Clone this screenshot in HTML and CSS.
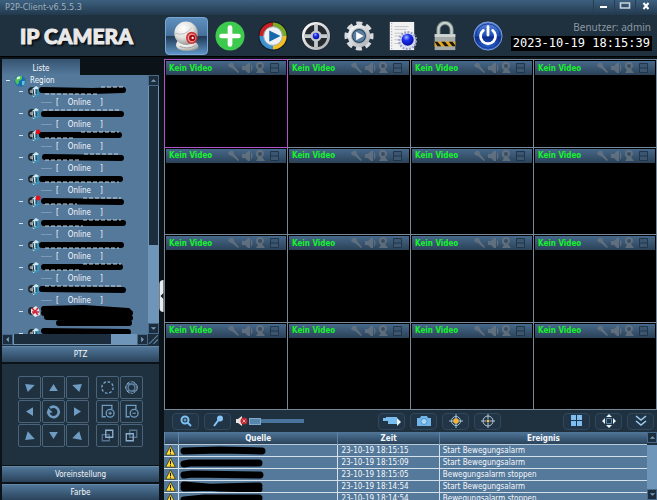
FILE: index.html
```html
<!DOCTYPE html>
<html lang="de">
<head>
<meta charset="utf-8">
<title>P2P-Client-v6.5.5.3</title>
<link rel="stylesheet" href="styles.css">
</head>
<body>
<svg class="defs" aria-hidden="true">
  <defs>
    <linearGradient id="silver" x1="0" y1="0" x2="1" y2="1"><stop offset="0" stop-color="#fff"/><stop offset="1" stop-color="#a9adb0"/></linearGradient>
    <radialGradient id="ball" cx=".38" cy=".3" r=".75"><stop offset="0" stop-color="#fff"/><stop offset=".55" stop-color="#e0e0dc"/><stop offset="1" stop-color="#8c8f90"/></radialGradient>
    <radialGradient id="blue" cx=".4" cy=".3" r=".7"><stop offset="0" stop-color="#a9b8ff"/><stop offset=".4" stop-color="#1b2ff0"/><stop offset="1" stop-color="#0510a0"/></radialGradient>
    <linearGradient id="power" x1="0" y1="0" x2="0" y2="1"><stop offset="0" stop-color="#5d8be0"/><stop offset=".48" stop-color="#1f4db4"/><stop offset=".55" stop-color="#0c2c8c"/><stop offset="1" stop-color="#2f6ad8"/></linearGradient>
    <symbol id="cell-tools" viewBox="0 0 56 12">
      <g fill="#6d7883" opacity=".75">
        <path d="M1 3l2-2 3 0 1 3 5 6-1 1-6-5-3-1z"/>
        <path d="M15 4h3l3-3h2v10h-2l-3-3h-3zM24 2q3 4 0 8z"/>
        <path d="M29 4a4 4 0 0 1 8 0 4 4 0 0 1-2 3l3 4h-9l2-3a4 4 0 0 1-2-4z"/>
      </g>
      <circle cx="33" cy="4" r="2" fill="#3a4d61"/>
      <path d="M43.500 1.500h8v9h-8zM43.500 6h8" fill="#3d566f" stroke="#21364a"/>
    </symbol>
    <symbol id="cam" viewBox="0 0 12 12">
      <circle cx="4" cy="5" r="4" fill="#1d2830"/><circle cx="3.500" cy="5.500" r="1.800" fill="#8b949b"/>
      <path d="M4 3l4-3 3 2 0 6-2 2-4 1z" fill="#cdeaf5"/><path d="M8 4l3-2 0 6-2 3-3 0 2-3z" fill="#2f91b8"/><path d="M5 3l1 7M8 3v5" stroke="#142733"/>
    </symbol>
    <symbol id="cam-off" viewBox="0 0 12 12">
      <circle cx="4" cy="5" r="4" fill="#1d2830"/><path d="M3 3l5-3 3 3 1 6-5 2-4-4z" fill="#e7e6ea"/><path d="M4 2l6 7M10 2l-5 6M4 6h7" stroke="#cc2738" stroke-width="1.500"/>
    </symbol>
    <symbol id="warn" viewBox="0 0 12 12"><path d="M6 1l5.300 10H.7z" fill="#ffdf3a" stroke="#352b08" stroke-width=".8" stroke-linejoin="round"/><path d="M6 4v4M6 9v1" stroke="#161200" stroke-width="1.200"/></symbol>
    <symbol id="tri" viewBox="0 0 24 24"><path d="M12 8l5 8H7z" fill="#6f9cc2"/></symbol>
    <symbol id="corner" viewBox="0 0 24 24"><path d="M7 8l11 1-8 8z" fill="#6f9cc2"/></symbol>
  </defs>
</svg>

<header class="titlebar">
  <h1 class="caption">P2P-Client-v6.5.5.3</h1>
  <div class="winbuttons">
    <button aria-label="Minimieren"><svg viewBox="0 0 14 12"><path d="M3 7h7" stroke="#fff" stroke-width="2"/></svg></button>
    <button aria-label="Maximieren"><svg viewBox="0 0 14 12"><path d="M2.500 3h9v5h-9z" fill="none" stroke="#c9d3dc" stroke-width="1.600"/></svg></button>
    <button aria-label="Beenden"><svg viewBox="0 0 14 12"><path d="M4.500 3l5 6M9.500 3l-5 6" stroke="#fff" stroke-width="2"/></svg></button>
  </div>
</header>

<div class="banner">
  <div class="logo">IP CAMERA</div>
  <nav class="mainnav">
    <button class="active" aria-label="Kamera"><svg viewBox="0 0 32 32"><path d="M6 21Q2 27 7 30q9 4 20 0 4-4-4-9z" fill="url(#ball)"/><circle cx="15" cy="13" r="12.500" fill="url(#ball)"/><path d="M8 27q9 4 17-1" stroke="#999" fill="none"/><path d="M3 13q11 4 18-6" stroke="#bbb" fill="none"/><ellipse cx="21" cy="18" rx="6" ry="6.500" fill="#c83333"/><ellipse cx="21" cy="18" rx="4.300" ry="4.800" fill="#f19b93"/><circle cx="21.500" cy="18" r="3.300" fill="#a50e18"/><circle cx="22" cy="18" r="1.200" fill="#fff"/></svg></button>
    <button aria-label="Hinzufügen"><svg viewBox="0 0 32 32"><circle cx="16" cy="16" r="15.500" fill="#3ecb4d"/><path d="M16 7v18M7 16h18" stroke="#fff" stroke-width="5" stroke-linecap="round"/></svg></button>
    <button aria-label="Wiedergabe"><svg viewBox="0 0 32 32"><circle cx="16" cy="16" r="15.500" fill="#101820"/><g fill="none" stroke-width="5"><path d="M16 4A12 12 0 0 0 4 16" stroke="#c92024"/><path d="M16 4a12 12 0 0 1 12 12" stroke="#78ac27"/><path d="M28 16a12 12 0 0 1-12 12" stroke="#f3bf23"/><path d="M16 28A12 12 0 0 1 4 16" stroke="#3a92d0"/></g><circle cx="16" cy="16" r="10" fill="#eef2f5" stroke="#9ba8b2"/><path d="M12 10l12 6-12 6z" fill="#1668ae"/></svg></button>
    <button aria-label="PTZ-Steuerung"><svg viewBox="0 0 32 32"><circle cx="16" cy="16" r="15.500" fill="#171b20"/><circle cx="16" cy="16" r="13.500" fill="#252a31" stroke="url(#silver)" stroke-width="3"/><path d="M16 4v24M4 16h24" stroke="#c6cacd" stroke-width="4"/><circle cx="16" cy="16" r="6" fill="#c6cacd"/><circle cx="16" cy="16" r="3.500" fill="url(#blue)"/></svg></button>
    <button aria-label="Einstellungen"><svg viewBox="0 0 32 32"><circle cx="16" cy="16" r="13" fill="none" stroke="#d8dbdd" stroke-width="5" stroke-dasharray="6.200 4" stroke-dashoffset="3.100"/><circle cx="16" cy="16" r="12" fill="url(#silver)"/><circle cx="16" cy="16" r="8" fill="#29435f" stroke="#aab5bd"/><circle cx="16" cy="16" r="6.500" fill="#5a7c9d"/><path d="M13 11.500l8 4.500-8 4.500z" fill="#fff"/></svg></button>
    <button aria-label="Protokoll"><svg viewBox="0 0 32 32"><path d="M3 1h26v30H3z" fill="#f3f2f2"/><path d="M5 2v28" stroke="#8b8b91" stroke-dasharray="1 2"/><path d="M8 6h15M8 9h13M8 13h8M8 16h6M8 20h5M8 24h5" stroke="#c1c0c5"/><circle cx="22" cy="21" r="9" fill="#dbe0ef" stroke="#9aa1c5" stroke-width="2.500" stroke-dasharray="2 1.500"/><circle cx="22" cy="20" r="6.500" fill="url(#blue)"/></svg></button>
    <button aria-label="Sperren"><svg viewBox="0 0 32 32"><path d="M9 16V9a7 7 0 0 1 14 0v7" fill="none" stroke="#717e7b" stroke-width="4.500"/><path d="M9 16V9a7 7 0 0 1 14 0v7" fill="none" stroke="#c5cfcb" stroke-width="2.500"/><path d="M5 14h22v17H5z" fill="#a6aca9"/><path d="M5 14h22v3H5z" fill="#d1d6d3"/><path d="M5 22h22v5H5z" fill="#e4a51f"/><path d="M5 22h3l4 5H8zM12 22h4l4 5h-4zM20 22h4l3 4v1h-3z" fill="#17160f"/></svg></button>
    <button aria-label="Abmelden"><svg viewBox="0 0 32 32"><circle cx="16" cy="16" r="15" fill="url(#power)" stroke="#82a5df"/><circle cx="16" cy="16" r="13" fill="none" stroke="#17378f"/><path d="M11 10a8 8 0 1 0 10 0" fill="none" stroke="#fff" stroke-width="3" stroke-linecap="round"/><path d="M16 6v9" stroke="#fff" stroke-width="3" stroke-linecap="round"/></svg></button>
  </nav>
  <div class="status">
    <span class="user">Benutzer: admin</span>
    <time class="clock" datetime="2023-10-19T18:15:39">2023-10-19 18:15:39</time>
  </div>
</div>

<div class="workspace">
  <aside class="sidebar">
    <div class="tabs"><button class="tab">Liste</button></div>
    <div class="treebox">
      <ul class="tree">
        <li class="region"><svg viewBox="0 0 24 12"><path d="M2 5.500h4" stroke="#d9e8f2"/><circle cx="16" cy="6" r="5.500" fill="#1b6cb4"/><path d="M12 3q3-3 6-2l0 3-3 2-1 4q-3-2-3-5z" fill="#4fc552"/><path d="M18 6l3 0-1 4-2 0z" fill="#59c9d8"/><path d="M13 2l3-.5v2l-3 1z" fill="#e2fae7"/></svg>Region</li>
        <li class="device"><i></i><svg class="ico"><use href="#cam"/></svg><svg class="mark" viewBox="0 0 98 11"><path d="M1 4l50 1 31-1" class="ink"/><path d="M4 8h52M60 1h22" class="speck"/></svg></li><li class="state"><i></i>[ <span>Online</span> ]</li>
        <li class="device"><i></i><svg class="ico"><use href="#cam"/></svg><svg class="mark" viewBox="0 0 98 11"><path d="M3 6h77" class="ink"/><path d="M2 2h78" class="speck"/></svg></li><li class="state"><i></i>[ <span>Online</span> ]</li>
        <li class="device"><i></i><svg class="ico"><use href="#cam"/><circle cx="10" cy="2" r="2.500" fill="#e11320"/></svg><svg class="mark" viewBox="0 0 98 11"><path d="M1 5h77" class="ink"/><path d="M40 2h38M4 8h30" class="speck"/></svg></li><li class="state"><i></i>[ <span>Online</span> ]</li>
        <li class="device"><i></i><svg class="ico"><use href="#cam"/></svg><svg class="mark" viewBox="0 0 98 11"><path d="M4 5l76 1" class="ink"/><path d="M43 2h36M4 8h36" class="speck"/></svg></li><li class="state"><i></i>[ <span>Online</span> ]</li>
        <li class="device"><i></i><svg class="ico"><use href="#cam"/></svg><svg class="mark" viewBox="0 0 98 11"><path d="M1 5h78" class="ink"/><path d="M4 8h74" class="speck"/></svg></li><li class="state"><i></i>[ <span>Online</span> ]</li>
        <li class="device"><i></i><svg class="ico"><use href="#cam"/><circle cx="10" cy="2" r="2.500" fill="#e11320"/></svg><svg class="mark" viewBox="0 0 98 11"><path d="M3 5l77 1" class="ink"/><path d="M42 2h38M4 8h32" class="speck"/></svg></li><li class="state"><i></i>[ <span>Online</span> ]</li>
        <li class="device"><i></i><svg class="ico"><use href="#cam"/></svg><svg class="mark" viewBox="0 0 98 11"><path d="M3 5h79" class="ink"/><path d="M42 2h38M4 8h38" class="speck"/></svg></li><li class="state"><i></i>[ <span>Online</span> ]</li>
        <li class="device"><i></i><svg class="ico"><use href="#cam"/></svg><svg class="mark" viewBox="0 0 98 11"><path d="M1 5h79" class="ink"/><path d="M4 8h74" class="speck"/></svg></li><li class="state"><i></i>[ <span>Online</span> ]</li>
        <li class="device"><i></i><svg class="ico"><use href="#cam"/></svg><svg class="mark" viewBox="0 0 98 11"><path d="M3 5h76" class="ink"/><path d="M42 2h38M4 8h36" class="speck"/></svg></li><li class="state"><i></i>[ <span>Online</span> ]</li>
        <li class="device"><i></i><svg class="ico"><use href="#cam"/></svg><svg class="mark" viewBox="0 0 98 11"><path d="M1 5l81 1" class="ink"/><path d="M4 2h78" class="speck"/></svg></li><li class="state"><i></i>[ <span>Online</span> ]</li>
        <li class="device"><i></i><svg class="ico"><use href="#cam-off"/></svg><svg class="mark" viewBox="0 0 98 11"><path d="M3 3l40-1 44 3M3 7h86M6 11l83 1M18 17h70" class="ink"/></svg></li><li class="state"></li>
        <li class="device"><i></i><svg class="ico"><use href="#cam"/></svg><svg class="mark" viewBox="0 0 98 11"><path d="M3 3l84 1" class="ink"/></svg></li>
      </ul>
      <div class="vscroll"><button aria-label="Nach oben"><svg viewBox="0 0 10 10"><path d="M2 6.500l3-3 3 3z"/></svg></button><div class="rail"><div class="thumb"></div></div><button aria-label="Nach unten"><svg viewBox="0 0 10 10"><path d="M2 3.500l3 3 3-3z"/></svg></button></div>
    </div>
    <div class="hscroll"><button aria-label="Nach links"><svg viewBox="0 0 10 10"><path d="M6.500 2l-3 3 3 3z"/></svg></button><div class="rail"><div class="thumb"></div></div><button aria-label="Nach rechts"><svg viewBox="0 0 10 10"><path d="M3.500 2l3 3-3 3z"/></svg></button><svg class="grip" viewBox="0 0 10 10"><path d="M1 9l8-8M5 9l4-4" stroke="#5f83a3"/></svg></div>
    <button class="section">PTZ</button>
    <div class="ptz">
      <div class="pad directions">
        <button aria-label="Links oben"><svg><use href="#corner"/></svg></button>
        <button aria-label="Oben"><svg><use href="#tri"/></svg></button>
        <button aria-label="Rechts oben"><svg class="flip"><use href="#corner"/></svg></button>
        <button aria-label="Links"><svg class="left"><use href="#tri"/></svg></button>
        <button aria-label="Drehen"><svg viewBox="0 0 24 24"><path d="M8 8a6 6 0 1 1-2 5" fill="none" stroke="#6f9cc2" stroke-width="3"/><path d="M4 14l2-6 5 5z" fill="#6f9cc2"/></svg></button>
        <button aria-label="Rechts"><svg class="right"><use href="#tri"/></svg></button>
        <button aria-label="Links unten"><svg viewBox="0 0 24 24"><path d="M10 7l8 9-11 1z" fill="#6f9cc2"/></svg></button>
        <button aria-label="Unten"><svg class="down"><use href="#tri"/></svg></button>
        <button aria-label="Rechts unten"><svg viewBox="0 0 24 24"><path d="M14 7L6 15l11 2z" fill="#6f9cc2"/></svg></button>
      </div>
      <div class="pad lens">
        <button aria-label="Blende auf"><svg viewBox="0 0 24 24"><circle cx="12" cy="12" r="6.500" fill="none" stroke="#6f9cc2" stroke-width="1.600" stroke-dasharray="3 2"/></svg></button>
        <button aria-label="Blende zu"><svg viewBox="0 0 24 24"><circle cx="12" cy="12" r="5" fill="none" stroke="#587b9a" stroke-width="4"/><circle cx="12" cy="12" r="6.500" fill="none" stroke="#9ab7cf" stroke-dasharray="4 2"/><path d="M9 6l6 1M17 9l0 6M15 18l-6-1M7 15V9" stroke="#203243"/></svg></button>
        <button aria-label="Zoom größer"><svg viewBox="0 0 24 24"><path d="M17 9V5H6v13h4" fill="none" stroke="#6f9cc2" stroke-width="1.500"/><circle cx="15" cy="14" r="4.500" fill="none" stroke="#6f9cc2" stroke-width="1.500"/><path d="M13 14h4M15 12v4" stroke="#8db1cf"/></svg></button>
        <button aria-label="Zoom kleiner"><svg viewBox="0 0 24 24"><path d="M17 9V5H6v13h4" fill="none" stroke="#6f9cc2" stroke-width="1.500"/><circle cx="15" cy="14" r="4.500" fill="none" stroke="#6f9cc2" stroke-width="1.500"/><path d="M13 14h4" stroke="#8db1cf"/></svg></button>
        <button aria-label="Fokus nah"><svg viewBox="0 0 24 24" fill="none" stroke-width="1.500"><path d="M6 11h8v7H6z" stroke="#54738f"/><path d="M10 6h8v8h-8z" stroke="#8bb0d0"/></svg></button>
        <button aria-label="Fokus fern"><svg viewBox="0 0 24 24" fill="none" stroke-width="1.500"><path d="M10 6h8v8h-8z" stroke="#54738f"/><path d="M6 10h8v8H6z" stroke="#8bb0d0"/></svg></button>
      </div>
    </div>
    <button class="section">Voreinstellung</button>
    <button class="section last">Farbe</button>
  </aside>
  <button class="splitter" aria-label="Seitenleiste einklappen"><svg viewBox="0 0 4 32"><path d="M0 4q0-4 4-4v32q-4 0-4-4z" fill="#e9edf0"/><path d="M4 13v6l-3-3z" fill="#101820"/></svg></button>

  <main class="main">
    <section class="wall">
      <div class="cell selected"><div class="bar">Kein Video<svg><use href="#cell-tools"/></svg></div></div>
      <div class="cell"><div class="bar">Kein Video<svg><use href="#cell-tools"/></svg></div></div>
      <div class="cell"><div class="bar">Kein Video<svg><use href="#cell-tools"/></svg></div></div>
      <div class="cell"><div class="bar">Kein Video<svg><use href="#cell-tools"/></svg></div></div>
      <div class="cell"><div class="bar">Kein Video<svg><use href="#cell-tools"/></svg></div></div>
      <div class="cell"><div class="bar">Kein Video<svg><use href="#cell-tools"/></svg></div></div>
      <div class="cell"><div class="bar">Kein Video<svg><use href="#cell-tools"/></svg></div></div>
      <div class="cell"><div class="bar">Kein Video<svg><use href="#cell-tools"/></svg></div></div>
      <div class="cell"><div class="bar">Kein Video<svg><use href="#cell-tools"/></svg></div></div>
      <div class="cell"><div class="bar">Kein Video<svg><use href="#cell-tools"/></svg></div></div>
      <div class="cell"><div class="bar">Kein Video<svg><use href="#cell-tools"/></svg></div></div>
      <div class="cell"><div class="bar">Kein Video<svg><use href="#cell-tools"/></svg></div></div>
      <div class="cell"><div class="bar">Kein Video<svg><use href="#cell-tools"/></svg></div></div>
      <div class="cell"><div class="bar">Kein Video<svg><use href="#cell-tools"/></svg></div></div>
      <div class="cell"><div class="bar">Kein Video<svg><use href="#cell-tools"/></svg></div></div>
      <div class="cell"><div class="bar">Kein Video<svg><use href="#cell-tools"/></svg></div></div>
    </section>

    <div class="controls">
      <button aria-label="Zoom"><svg viewBox="0 0 20 14"><circle cx="9" cy="6" r="3.500" fill="none" stroke="#7fc0f2" stroke-width="2"/><path d="M9 4.500v3M7.500 6h3" stroke="#7fc0f2"/><path d="M11.500 8.500l3.500 3.500" stroke="#7fc0f2" stroke-width="2"/></svg></button>
      <button aria-label="Mikrofon"><svg viewBox="0 0 20 14"><circle cx="12" cy="4.500" r="3" fill="#86c5f5"/><path d="M10.500 6L6 12" stroke="#86c5f5" stroke-width="2"/></svg></button>
      <label class="volume"><svg viewBox="0 0 12 12"><path d="M0 4h2l4-3v10L2 8H0z" fill="#e8e3e3"/><circle cx="8" cy="6" r="3.500" fill="#bb2630"/><path d="M6.500 4.500l3 3M9.500 4.500l-3 3" stroke="#f5abae"/></svg><input type="range" min="0" max="100" value="0" aria-label="Lautstärke"></label>
      <span class="spacer"></span>
      <button aria-label="Aufnahme"><svg viewBox="0 0 20 14"><path d="M1 4h3V3h11v2l3 3-3 3v-1H6V7H1z" fill="#79bdf0"/><path d="M15 4l4 4-4 4z" fill="#e9f5ff"/></svg></button>
      <button aria-label="Schnappschuss"><svg viewBox="0 0 20 14"><path d="M3 4h3l1-2h6l1 2h3v8H3z" fill="#72b5ea"/><circle cx="10" cy="7.500" r="3" fill="#a7d6fa" stroke="#4f92c7"/></svg></button>
      <button aria-label="Alarm ein"><svg viewBox="0 0 20 14"><circle cx="10" cy="7" r="4.500" fill="none" stroke="#a6c7dc"/><path d="M10 0v14M3 7h14" stroke="#a6c7dc"/><circle cx="10" cy="7" r="2.800" fill="#f2b33a"/></svg></button>
      <button aria-label="Alarm aus"><svg viewBox="0 0 20 14"><circle cx="10" cy="7" r="5" fill="none" stroke="#b3c6d3"/><path d="M10 0v5M10 9v5M3 7h5M12 7h5" stroke="#b3c6d3"/><circle cx="10" cy="7" r="1.500" fill="#e7bd5c"/></svg></button>
      <span class="spacer"></span>
      <button aria-label="Raster"><svg viewBox="0 0 20 14"><path d="M4 1h5v5H4zM10 1h5v5h-5zM4 7h5v5H4zM10 7h5v5h-5z" fill="#7dbff1"/></svg></button>
      <button aria-label="Vollbild"><svg viewBox="0 0 20 14"><path d="M7.500 4.500h5v5h-5z" fill="none" stroke="#5d86a7"/><path d="M10 0l3 3H7zM10 14l-3-3h6zM3 7l3-3v6zM17 7l-3-3v6z" fill="#eaf4fb"/></svg></button>
      <button aria-label="Einklappen"><svg viewBox="0 0 20 14"><path d="M5 2l5 4 5-4M5 7l5 4 5-4" fill="none" stroke="#9dcaee" stroke-width="1.600"/></svg></button>
    </div>

    <section class="log">
      <div class="logview">
        <table>
          <colgroup><col class="c-icon"><col class="c-src"><col class="c-time"><col></colgroup>
          <thead><tr><th></th><th>Quelle</th><th>Zeit</th><th>Ereignis</th></tr></thead>
          <tbody>
            <tr><td><svg class="warn"><use href="#warn"/></svg></td><td><svg class="scrub" viewBox="0 0 100 11"><path d="M5 6l36-1 42 1"/></svg></td><td>23-10-19 18:15:15</td><td>Start Bewegungsalarm</td></tr>
            <tr><td><svg class="warn"><use href="#warn"/></svg></td><td><svg class="scrub" viewBox="0 0 100 11"><path d="M5 7l6-1h69"/></svg></td><td>23-10-19 18:15:09</td><td>Start Bewegungsalarm</td></tr>
            <tr><td><svg class="warn"><use href="#warn"/></svg></td><td><svg class="scrub" viewBox="0 0 100 11"><path d="M5 6l8-1 68 1"/></svg></td><td>23-10-19 18:15:05</td><td>Bewegungsalarm stoppen</td></tr>
            <tr><td><svg class="warn"><use href="#warn"/></svg></td><td><svg class="scrub" viewBox="0 0 100 11"><path d="M5 4l35 3 40 1M5 7l35-1 40-1"/></svg></td><td>23-10-19 18:14:54</td><td>Start Bewegungsalarm</td></tr>
            <tr><td><svg class="warn"><use href="#warn"/></svg></td><td><svg class="scrub" viewBox="0 0 100 11"><path d="M5 7l20-2h55"/></svg></td><td>23-10-19 18:14:54</td><td>Bewegungsalarm stoppen</td></tr>
          </tbody>
        </table>
      </div>
      <div class="vscroll"><button aria-label="Nach oben"><svg viewBox="0 0 10 10"><path d="M2 6.500l3-3 3 3z"/></svg></button><div class="rail"><div class="thumb"></div></div><button aria-label="Nach unten"><svg viewBox="0 0 10 10"><path d="M2 3.500l3 3 3-3z"/></svg></button></div>
    </section>
  </main>
</div>
</body>
</html>
```
FILE: styles.css
```css
* { box-sizing: border-box; }

:root {
  --panel: #54799b;
  --dark: #1f303f;
  --edge: #0b1319;
  --bar: linear-gradient(#527799, #3c5c7a 50%, #2b435a);
}

body {
  margin: 0;
  height: 100vh;
  display: flex;
  flex-direction: column;
  overflow: hidden;
  background: var(--edge);
  color: #f4f8fb;
  font: 8px/11px "DejaVu Sans Condensed", "DejaVu Sans", sans-serif;
}

button {
  margin: 0;
  padding: 0;
  border: 0;
  background: none;
  color: inherit;
  font: inherit;
}

svg { display: block; }
.defs { position: absolute; width: 0; height: 0; }

.titlebar {
  height: 15px;
  flex: none;
  display: flex;
  justify-content: space-between;
  padding: 0 1px 0 5px;
  background: linear-gradient(#3d6080, #22394d);
}
.caption { margin: 0; padding-top: 2px; font-size: 9px; line-height: 11px; font-weight: normal; color: #9fb0be; }
.winbuttons { display: flex; }
.winbuttons button { width: 21px; height: 12px; border-left: 1px solid #263d52; display: flex; justify-content: center; }
.winbuttons svg { width: 14px; height: 12px; }

.banner {
  flex: none;
  height: 41px;
  display: flex;
  align-items: center;
  background: #1f303f;
}
.logo {
  width: 165px;
  flex: none;
  padding-left: 20px;
  font: 900 21px/32px Lato, "Liberation Sans", sans-serif;
  color: #e9e9e9;
  -webkit-text-stroke: 1px #e9e9e9;
  text-shadow: 2px 2px 2px #05090d;
  white-space: nowrap;
}
.mainnav { display: flex; flex: none; }
.mainnav button { width: 43px; height: 38px; display: grid; place-items: center; border-radius: 4px; }
.mainnav svg { width: 30px; height: 30px; }
.mainnav .active { border: 1px solid #75a8d6; background: linear-gradient(#6090bf, #456f99 50%, #203a55 51%, #5f94c4); }
.status { flex: 1; display: flex; flex-direction: column; align-items: flex-end; padding-right: 5px; }
.user { font: 10px/14px "Noto Sans", sans-serif; color: #8b979f; padding-right: 1px; }
.clock {
  margin-top: 2px;
  padding: 0 2px;
  background: #000;
  font: 12px/15px "DejaVu Sans Mono", monospace;
  color: #fff;
  white-space: nowrap;
}

.workspace { flex: 1; min-height: 0; display: flex; padding: 2px 0 0 2px; border-top: 1px solid #000; }

.sidebar { width: 157px; flex: none; display: flex; flex-direction: column; }
.tabs { height: 16px; flex: none; }
.tab { width: 78px; height: 16px; padding-top: 3px; background: linear-gradient(#365370, var(--panel)); }
.treebox { flex: 1; min-height: 0; display: flex; background: var(--panel); overflow: hidden; }
.tree { flex: 1; margin: 0; padding: 0; list-style: none; }
.tree li { height: 11px; display: flex; align-items: center; }
.region svg { width: 24px; height: 12px; margin: 0 2px; }
.device { padding-left: 17px; }
.device i { width: 4px; height: 1px; margin-right: 5px; background: #cfe0ec; }
.ico { width: 12px; height: 12px; overflow: visible; flex: none; }
.mark { width: 98px; height: 11px; margin-left: 1px; overflow: visible; flex: none; }
.ink { fill: none; stroke: #000; stroke-width: 6; stroke-linecap: round; stroke-linejoin: round; }
.speck { stroke: #c3d3df; stroke-width: 1; stroke-dasharray: 4 2; }
.state { padding-left: 39px; }
.state i { width: 11px; height: 1px; margin-right: 4px; background: #7b9ab5; }
.state span { margin: 0 9px; }

.vscroll { width: 11px; flex: none; display: flex; flex-direction: column; background: #6f95b8; }
.vscroll button, .hscroll button { width: 11px; height: 11px; flex: none; background: #1c2e3e; border: 1px solid #49698a; }
.vscroll svg, .hscroll button svg { width: 9px; height: 9px; fill: #7b9dbc; }
.rail { flex: 1; min-height: 0; }
.treebox .thumb { width: 9px; height: 67%; margin-left: 1px; background: #1c2e3e; }
.hscroll { height: 12px; flex: none; display: flex; background: #6f95b8; border-bottom: 1px solid #1c2e3e; }
.hscroll .thumb { width: 78%; height: 10px; margin: 0 1px; background: #1c2e3e; }
.grip { width: 11px; height: 11px; background: #1c2e3e; }

.section { flex: none; height: 16px; background: var(--bar); border-top: 1px solid #6487a6; line-height: 14px; }
.last { margin-top: 2px; }
.ptz { flex: none; height: 104px; display: flex; align-items: center; gap: 7px; padding: 0 16px 6px; background: var(--dark); border-top: 2px solid var(--edge); border-bottom: 1px solid var(--edge); }
.pad { display: grid; gap: 1px; }
.directions { grid-template-columns: repeat(3, 23px); }
.lens { grid-template-columns: repeat(2, 23px); }
.pad button { width: 23px; height: 23px; border: 1px solid #49637a; border-radius: 2px; }
.pad svg { width: 21px; height: 21px; }
.flip { transform: scaleX(-1); }
.left { transform: rotate(-90deg); }
.right { transform: rotate(90deg); }
.down { transform: rotate(180deg); }

.splitter { width: 5px; flex: none; align-self: center; margin-top: 32px; }
.splitter svg { width: 5px; height: 32px; }

.main { flex: 1; min-width: 0; display: flex; flex-direction: column; }
.wall {
  flex: 1;
  min-height: 0;
  display: grid;
  grid-template: repeat(4, 1fr) / repeat(4, 1fr);
  gap: 1px;
  padding: 1px;
  background: #75899b;
}
.cell { min-width: 0; background: #000; padding: 1px; }
.selected { position: relative; z-index: 1; margin: -1px; border: 1px solid #b052c8; }
.bar {
  height: 14px;
  display: flex;
  justify-content: space-between;
  align-items: center;
  padding: 0 3px;
  background: linear-gradient(#46688a, #2b4258);
  color: #16f22c;
  font-weight: bold;
}
.bar svg { width: 56px; height: 12px; }

.controls { flex: none; height: 22px; display: flex; align-items: center; gap: 5px; padding: 0 3px 0 8px; background: var(--dark); }
.controls button { width: 27px; height: 17px; display: grid; place-items: center; border: 1px solid #2f485d; border-radius: 4px; background: #213547; }
.controls button svg { width: 20px; height: 14px; }
.volume { display: flex; align-items: center; gap: 1px; }
.volume svg { width: 12px; height: 12px; }
.volume input { -webkit-appearance: none; appearance: none; width: 55px; height: 4px; margin: 0; background: #49759c; }
.volume input::-webkit-slider-thumb { -webkit-appearance: none; width: 12px; height: 7px; background: #5686ae; border: 1px solid #82a9c9; }
.spacer { flex: 1 1 0; }
.volume + .spacer { flex-grow: 5; }
.controls .spacer:nth-last-child(4) { flex-grow: 4; }

.log { flex: none; height: 68px; display: flex; }
.logview { flex: 1; min-width: 0; overflow: hidden; background: var(--panel); }
table { width: 100%; table-layout: fixed; border-collapse: separate; border-spacing: 0; }
.c-icon { width: 14px; }
.c-src { width: 33%; }
.c-time { width: 21%; }
th { height: 13px; padding: 0; background: var(--bar); border-left: 1px solid #5f86a8; border-bottom: 1px solid #b7cad9; }
td { height: 12px; padding: 0 0 0 3px; border-left: 1px solid #d5e2ec; border-bottom: 1px solid #d5e2ec; white-space: nowrap; }
td:first-child { padding: 0; border-left: 0; }
td:nth-child(2) { padding: 0; }
.warn { width: 13px; height: 11px; }
.scrub { width: 100px; height: 11px; fill: none; stroke: #000; stroke-width: 7; stroke-linecap: round; stroke-linejoin: round; }
.log .vscroll { width: 10px; }
.log .vscroll button { width: 10px; }
.log .thumb { height: 2px; background: #1c2e3e; }
```
